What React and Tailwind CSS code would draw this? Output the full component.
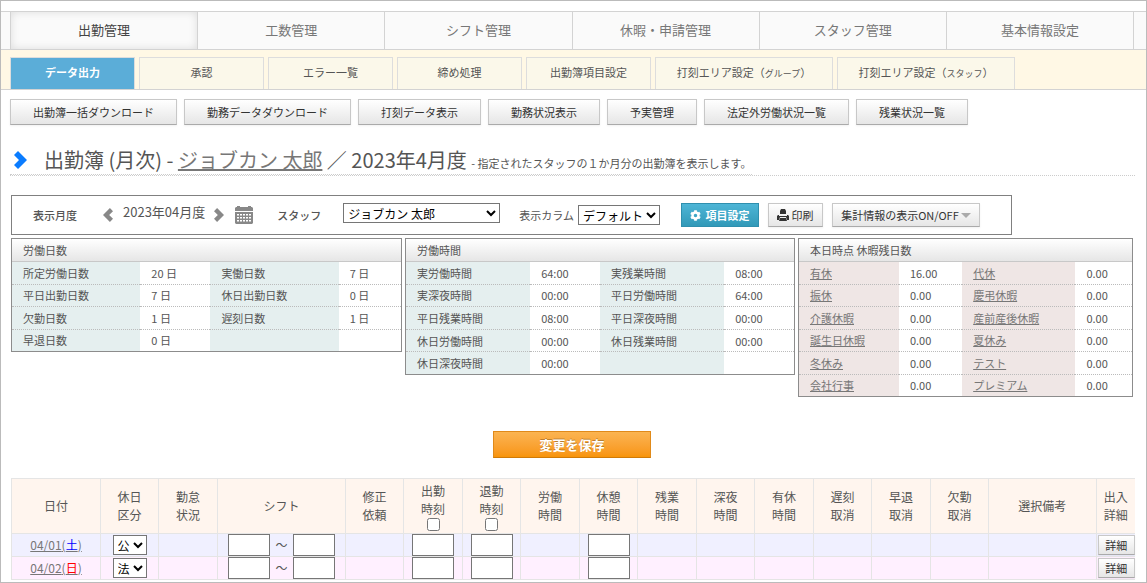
import React, { useState } from 'react';
import { FaCog } from 'react-icons/fa';

const mainTabs = ['出勤管理', '工数管理', 'シフト管理', '休暇・申請管理', 'スタッフ管理', '基本情報設定'];

const subTabs = [
  { label: 'データ出力' },
  { label: '承認' },
  { label: 'エラー一覧' },
  { label: '締め処理' },
  { label: '出勤簿項目設定' },
  { label: '打刻エリア設定', note: 'グループ' },
  { label: '打刻エリア設定', note: 'スタッフ' },
];

const actions = [
  '出勤簿一括ダウンロード',
  '勤務データダウンロード',
  '打刻データ表示',
  '勤務状況表示',
  '予実管理',
  '法定外労働状況一覧',
  '残業状況一覧',
];

const summaries = [
  {
    title: '労働日数',
    height: 'h-[89px]',
    labelBg: 'bg-[#e5efef]',
    cols: ['w-[33%]', 'w-[18%]', 'w-[33%]', 'w-[16%]'],
    rows: [
      ['所定労働日数', '20 日', '実働日数', '7 日'],
      ['平日出勤日数', '7 日', '休日出勤日数', '0 日'],
      ['欠勤日数', '1 日', '遅刻日数', '1 日'],
      ['早退日数', '0 日', '', ''],
    ],
  },
  {
    title: '労働時間',
    height: 'h-[112px]',
    labelBg: 'bg-[#e5efef]',
    cols: ['w-[32%]', 'w-[18%]', 'w-[32%]', 'w-[18%]'],
    rows: [
      ['実労働時間', '64:00', '実残業時間', '08:00'],
      ['実深夜時間', '00:00', '平日労働時間', '64:00'],
      ['平日残業時間', '08:00', '平日深夜時間', '00:00'],
      ['休日労働時間', '00:00', '休日残業時間', '00:00'],
      ['休日深夜時間', '00:00', '', ''],
    ],
  },
  {
    title: '本日時点 休暇残日数',
    height: 'h-[134px]',
    labelBg: 'bg-[#efe6e5]',
    cols: ['w-[30%]', 'w-[19%]', 'w-[34%]', 'w-[17%]'],
    links: true,
    rows: [
      ['有休', '16.00', '代休', '0.00'],
      ['振休', '0.00', '慶弔休暇', '0.00'],
      ['介護休暇', '0.00', '産前産後休暇', '0.00'],
      ['誕生日休暇', '0.00', '夏休み', '0.00'],
      ['冬休み', '0.00', 'テスト', '0.00'],
      ['会社行事', '0.00', 'プレミアム', '0.00'],
    ],
  },
];

const columns = [
  { lines: ['日付'], width: 'w-[89px]' },
  { lines: ['休日', '区分'], width: 'w-[58px]' },
  { lines: ['勤怠', '状況'], width: 'w-[59px]' },
  { lines: ['シフト'], width: 'w-[128px]' },
  { lines: ['修正', '依頼'], width: 'w-[58px]' },
  { lines: ['出勤', '時刻'], width: 'w-[59px]', check: true },
  { lines: ['退勤', '時刻'], width: 'w-[58px]', check: true },
  { lines: ['労働', '時間'], width: 'w-[59px]' },
  { lines: ['休憩', '時間'], width: 'w-[58px]' },
  { lines: ['残業', '時間'], width: 'w-[59px]' },
  { lines: ['深夜', '時間'], width: 'w-[58px]' },
  { lines: ['有休', '時間'], width: 'w-[59px]' },
  { lines: ['遅刻', '取消'], width: 'w-[58px]' },
  { lines: ['早退', '取消'], width: 'w-[59px]' },
  { lines: ['欠勤', '取消'], width: 'w-[58px]' },
  { lines: ['選択備考'], width: '' },
  { lines: ['出入', '詳細'], width: 'w-[39px]' },
];

const days = [
  { date: '04/01', day: '土', kind: '公', bg: 'bg-[#f0f0ff]', color: 'text-[#0000ff]' },
  { date: '04/02', day: '日', kind: '法', bg: 'bg-[#fff0ff]', color: 'text-[#ff0000]' },
];

const grayButton =
  'border border-[#c8c8c8] border-b-[#aaaaaa] bg-linear-to-b from-white to-[#e6e6e6] text-[#333333] shadow-[0_1px_2px_rgba(0,0,0,0.06)] cursor-pointer';

const Chevron = ({ className }) => (
  <svg viewBox="0 0 13 18" className={className} fill="currentColor" aria-hidden="true">
    <path d="M4 0 13 9 4 18 0 14 5 9 0 4Z" />
  </svg>
);

const CalendarIcon = () => (
  <svg width="18" height="18" viewBox="0 0 18 18" fill="currentColor" aria-hidden="true">
    <path d="M1 1h1V0h3v1h8V0h3v1h1l1 1v3H0V2Z" />
    <path
      fillRule="evenodd"
      d="M0 6h18v11l-1 1H1l-1-1ZM2 8v1.5h2V8ZM5 8v1.5h2V8ZM8 8v1.5h2V8ZM11 8v1.5h2V8ZM14 8v1.5h2V8ZM2 11v1.5h2V11ZM5 11v1.5h2V11ZM8 11v1.5h2V11ZM11 11v1.5h2V11ZM14 11v1.5h2V11ZM2 14v1.5h2V14ZM5 14v1.5h2V14ZM8 14v1.5h2V14ZM11 14v1.5h2V14ZM14 14v1.5h2V14Z"
    />
  </svg>
);

const PrintIcon = () => (
  <svg width="12" height="12" viewBox="0 0 12 12" fill="currentColor" aria-hidden="true">
    <path d="M4 0h4l1 2v3H3V2Z" />
    <path d="M0 7l1-1h1v1h8V6h1l1 1v4h-2L9 8H3l-1 3H0Z" />
    <path d="M3 9h6l1 3H2Z" />
  </svg>
);

const SummaryPanel = ({ panel }) => (
  <section className="border border-[#8c8c8c]">
    <h2 className="h-[23px] border-b border-[#c8c8c8] bg-linear-to-b from-white to-[#e6e6e6] px-[11px] leading-[23px]">
      {panel.title}
    </h2>
    <table className={`w-full table-fixed border-separate border-spacing-0 ${panel.height}`}>
      <colgroup>
        {panel.cols.map((width, index) => (
          <col key={index} className={width} />
        ))}
      </colgroup>
      <tbody>
        {panel.rows.map((row, r) => (
          <tr key={r}>
            {row.map((text, c) => {
              const line = r < panel.rows.length - 1 ? 'border-b border-dotted border-[#bbbbbb]' : '';
              const Cell = c % 2 === 0 && text ? 'th' : 'td';
              return (
                <Cell
                  key={c}
                  className={`pl-[11px] text-left font-normal leading-[20px] whitespace-nowrap ${line} ${c % 2 === 0 ? panel.labelBg : ''}`}
                >
                  {panel.links && c % 2 === 0 ? (
                    <a href="#" className="text-[#777777] underline">{text}</a>
                  ) : (
                    text
                  )}
                </Cell>
              );
            })}
          </tr>
        ))}
      </tbody>
    </table>
  </section>
);

const TimeInput = ({ label }) => (
  <input type="text" aria-label={label} className="block h-[22px] w-[42px] border border-[#767676] bg-white px-1" />
);

const DayRow = ({ item }) => (
  <tr className={`h-[23px] ${item.bg}`}>
    <td className="border border-[#e5e5e5] p-0 text-center">
      <a href="#" className="text-[#777777] underline">
        {item.date}(<span className={item.color}>{item.day}</span>)
      </a>
    </td>
    <td className="border border-[#e5e5e5] p-0">
      <select
        aria-label={`${item.date} 休日区分`}
        defaultValue={item.kind}
        className="mx-auto block h-[20px] w-[34px] border border-[#767676] bg-white text-black"
      >
        <option>{item.kind}</option>
      </select>
    </td>
    <td className="border border-[#e5e5e5]" />
    <td className="border border-[#e5e5e5] p-0">
      <div className="flex items-center justify-center gap-[5px]">
        <TimeInput label={`${item.date} シフト開始`} />
        <span className="leading-[18px]">～</span>
        <TimeInput label={`${item.date} シフト終了`} />
      </div>
    </td>
    <td className="border border-[#e5e5e5]" />
    <td className="border border-[#e5e5e5] p-0">
      <div className="flex justify-center"><TimeInput label={`${item.date} 出勤時刻`} /></div>
    </td>
    <td className="border border-[#e5e5e5] p-0">
      <div className="flex justify-center"><TimeInput label={`${item.date} 退勤時刻`} /></div>
    </td>
    <td className="border border-[#e5e5e5]" />
    <td className="border border-[#e5e5e5] p-0">
      <div className="flex justify-center"><TimeInput label={`${item.date} 休憩時間`} /></div>
    </td>
    {columns.slice(9, 16).map((column, index) => (
      <td key={index} className="border border-[#e5e5e5]" />
    ))}
    <td className="border border-r-0 border-[#e5e5e5] p-0 pl-px">
      <button type="button" className={`block h-[20px] w-full text-[11px] leading-[18px] ${grayButton}`}>
        詳細
      </button>
    </td>
  </tr>
);

const App = () => {
  const [activeMain, setActiveMain] = useState(0);
  const [activeSub, setActiveSub] = useState(0);

  return (
    <div className="h-screen overflow-hidden border border-[#bbbbbb] bg-white pt-[10px] font-['Noto_Sans_CJK_JP',sans-serif] text-[11px] leading-[18px] text-[#555555]">
      <nav className="flex border-y border-[#d3d3d3] bg-[#fafafa] pr-3 pl-[9px]">
        {mainTabs.map((tab, index) => (
          <a
            key={tab}
            href="#"
            onClick={() => setActiveMain(index)}
            className={`h-[37px] flex-1 border-l border-[#d3d3d3] text-center text-[13px] leading-[35px] last:border-r ${
              index === activeMain ? 'text-[#444444] shadow-[inset_0_0_8px_rgba(0,0,0,0.12)]' : 'text-[#777777]'
            }`}
          >
            {tab}
          </a>
        ))}
      </nav>

      <nav className="flex gap-1 border-b border-[#d3d3d3] bg-[#fff8e5] pt-[7px] pl-[9px]">
        {subTabs.map((tab, index) => (
          <a
            key={index}
            href="#"
            onClick={() => setActiveSub(index)}
            className={`h-8 border border-b-0 border-[#dddddd] text-center leading-[29px] ${tab.note ? 'w-[178px]' : 'w-[125px]'} ${
              index === activeSub ? 'bg-[#5badd8] font-bold text-white' : 'bg-[#fbf8ea]'
            }`}
          >
            {tab.label}
            {tab.note && (
              <>
                （<span className="text-[9px]">{tab.note}</span>）
              </>
            )}
          </a>
        ))}
      </nav>

      <div className="flex gap-[7px] pt-[9px] pl-[9px]">
        {actions.map((label) => (
          <button key={label} type="button" className={`h-[26px] px-[22px] ${grayButton}`}>
            {label}
          </button>
        ))}
      </div>

      <header className="mt-5 mr-[11px] ml-[9px] flex border-b border-dotted border-[#cccccc]">
        <h1 className="flex items-center border-b border-dotted border-[#cccccc] pl-1 text-[20px] leading-[29px]">
          <Chevron className="mr-[17px] h-[18px] w-[13px] text-[#0a7cff]" />
          <span>
            出勤簿 (月次) - <a href="#" className="text-[#777777] underline">ジョブカン 太郎</a> ／ 2023年4月度{' '}
            <small className="text-[11px] leading-none">- 指定されたスタッフの１か月分の出勤簿を表示します。</small>
          </span>
        </h1>
      </header>

      <form className="mt-[19px] ml-[10px] flex h-10 w-[1001px] items-center border border-[#808080] pl-[21px]">
        <span className="font-medium">表示月度</span>
        <button type="button" aria-label="前月" className="ml-[26px] text-[#888888]">
          <Chevron className="h-[14px] w-[10px] rotate-180" />
        </button>
        <span className="mr-[9px] ml-[10px] pb-[6px] text-[13px]">2023年04月度</span>
        <button type="button" aria-label="翌月" className="text-[#888888]">
          <Chevron className="h-[14px] w-[10px]" />
        </button>
        <button type="button" aria-label="カレンダー" className="ml-[11px] text-[#888888]">
          <CalendarIcon />
        </button>
        <label htmlFor="staff" className="ml-6 font-medium">スタッフ</label>
        <select
          id="staff"
          className="mt-[7px] ml-[22px] h-[20px] w-[157px] self-start border border-[#767676] bg-white text-[12px] text-black"
        >
          <option>ジョブカン 太郎</option>
        </select>
        <label htmlFor="columns" className="ml-[19px]">表示カラム</label>
        <select id="columns" className="ml-1 h-[20px] w-[82px] border border-[#767676] bg-white text-[12px] text-black">
          <option>デフォルト</option>
        </select>
        <button
          type="button"
          className="ml-[21px] flex h-6 w-[78px] cursor-pointer items-center justify-center gap-1 border border-[#2f8fae] bg-linear-to-b from-[#4db5d6] to-[#3199b8] font-bold text-white"
        >
          <FaCog size={11} />
          項目設定
        </button>
        <button type="button" className={`ml-[9px] flex h-6 w-[55px] items-center justify-center gap-[2px] ${grayButton}`}>
          <PrintIcon />
          印刷
        </button>
        <button type="button" className={`ml-[9px] flex h-6 w-[148px] items-center justify-center gap-[2px] ${grayButton}`}>
          集計情報の表示ON/OFF
          <svg width="10" height="5" viewBox="0 0 10 5" fill="#aaaaaa" aria-hidden="true">
            <path d="M0 0h10L5 5Z" />
          </svg>
        </button>
      </form>

      <div className="mt-[3px] mr-[13px] ml-[10px] grid h-[159px] grid-cols-[391fr_390fr_335fr] items-start gap-[3px]">
        {summaries.map((panel) => (
          <SummaryPanel key={panel.title} panel={panel} />
        ))}
      </div>

      <div className="mt-[34px] mb-5 flex justify-center pr-[3px]">
        <button
          type="button"
          className="h-[27px] w-[158px] cursor-pointer border border-[#e08a1a] border-b-[#cf7a08] bg-linear-to-b from-[#fbb450] to-[#f89406] text-[13px] leading-[24px] font-bold text-white [text-shadow:0_-1px_0_rgba(0,0,0,0.25)]"
        >
          変更を保存
        </button>
      </div>

      <div className="mr-[11px] ml-[10px]">
        <table className="w-full table-fixed border-collapse text-[12px]">
          <thead>
            <tr className="h-[55px] bg-[#fff5ee]">
              {columns.map((column, index) => (
                <th key={index} className={`border border-[#e5e5e5] p-0 text-center font-normal last:border-r-0 ${column.width}`}>
                  {column.lines.map((line) => (
                    <div key={line}>{line}</div>
                  ))}
                  {column.check && (
                    <input type="checkbox" aria-label={column.lines.join('')} className="mx-auto block h-[13px] w-[13px]" />
                  )}
                </th>
              ))}
            </tr>
          </thead>
          <tbody>
            {days.map((item) => (
              <DayRow key={item.date} item={item} />
            ))}
          </tbody>
        </table>
      </div>
    </div>
  );
};

export default App;
